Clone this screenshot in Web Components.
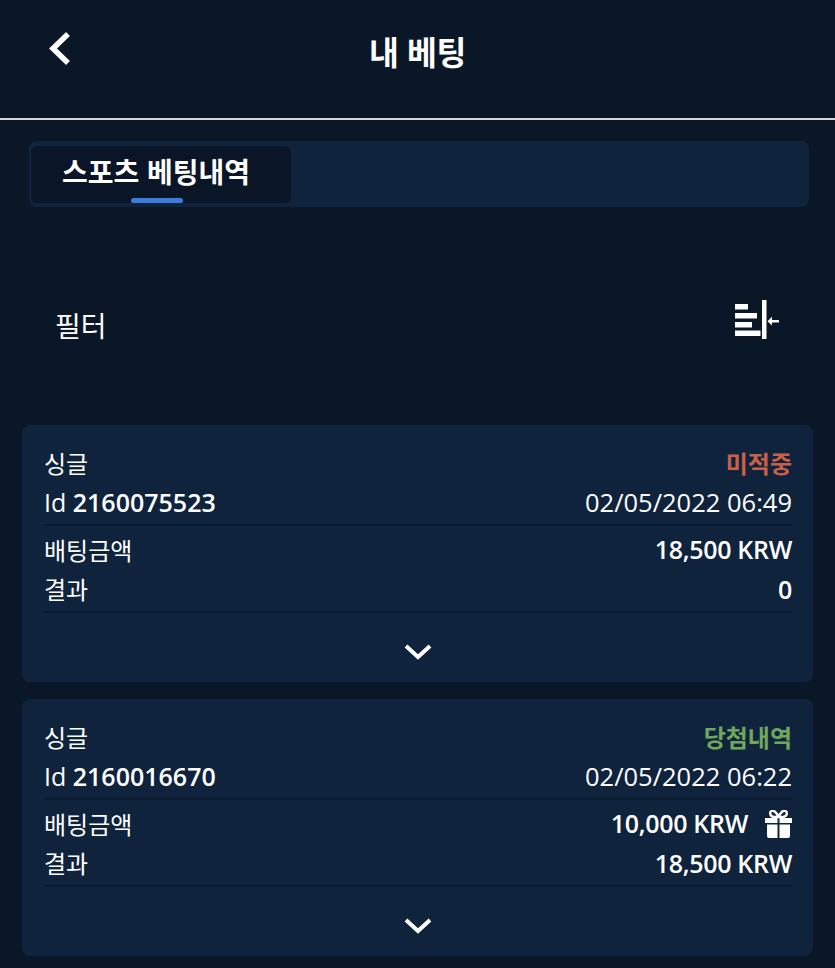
<!DOCTYPE html>
<html lang="ko">
<head>
<meta charset="utf-8">
<title>내 베팅</title>
<style>
    html, body { margin: 0; background: #0a1727; }
    body {
        width: 835px;
        height: 968px;
        overflow: hidden;
        color: #fff;
        font-family: "Open Sans", "Noto Sans CJK KR", sans-serif;
    }
</style>
</head>
<body>
<app-header>내 베팅</app-header>
<tab-bar>스포츠 베팅내역</tab-bar>
<filter-bar>필터</filter-bar>
<bet-list>
    <bet-card status="미적중" tone="lost" bet-id="2160075523" date="02/05/2022 06:49" stake="18,500 KRW" result="0"></bet-card>
    <bet-card status="당첨내역" tone="won" bet-id="2160016670" date="02/05/2022 06:22" stake="10,000 KRW" result="18,500 KRW" gift></bet-card>
</bet-list>

<script>
const KR = '"Noto Sans CJK KR", sans-serif';

class AppHeader extends HTMLElement {
    constructor() {
        super();
        this.attachShadow({ mode: 'open' }).innerHTML = `
            <style>
                :host { display: flex; align-items: center; justify-content: center; height: 118px; border-bottom: 2px solid #d3d7da; position: relative; }
                h1 { margin: -16px 0 0; font: 700 32.5px/1 ${KR}; letter-spacing: -0.5px; }
                svg { position: absolute; left: 46px; top: 30px; }
            </style>
            <svg width="26" height="38" viewBox="0 0 26 38" fill="none"><path d="M22 4 7 18.5 22 33" stroke="#fff" stroke-width="5.5"/></svg>
            <h1><slot></slot></h1>`;
    }
}

class TabBar extends HTMLElement {
    constructor() {
        super();
        this.attachShadow({ mode: 'open' }).innerHTML = `
            <style>
                :host { display: block; box-sizing: border-box; width: 780px; height: 66px; margin: 21px 0 0 29px; padding: 5px 0 4px 2px; background: #10233d; border-radius: 8px; }
                .tab { position: relative; display: flex; align-items: center; justify-content: center; box-sizing: border-box; width: 260px; height: 57px; padding: 0 10px 8px 0; background: #0a1627; border-radius: 6px; font: 700 28px/1 ${KR}; }
                .tab::after { content: ""; position: absolute; left: 100px; bottom: 0; width: 52px; height: 5px; border-radius: 3px; background: #3b7ddd; }
            </style>
            <div class="tab"><slot></slot></div>`;
    }
}

class FilterBar extends HTMLElement {
    constructor() {
        super();
        this.attachShadow({ mode: 'open' }).innerHTML = `
            <style>
                :host { display: flex; align-items: center; justify-content: space-between; height: 54px; margin-top: 91px; padding: 0 56px 0 55px; font: 400 28px/1 ${KR}; }
                svg { display: block; align-self: flex-start; margin-top: 2px; }
            </style>
            <span><slot></slot></span>
            <svg width="44" height="40" viewBox="0 0 44 40" fill="#fff">
                <rect x="0" y="4" width="13" height="5.500"/>
                <rect x="0" y="13" width="22" height="5.500"/>
                <rect x="0" y="22" width="17" height="5.500"/>
                <rect x="0" y="30.500" width="25.500" height="5.500"/>
                <rect x="27" y="0" width="4.500" height="39"/>
                <path d="M37 20h7v2.400h-7v3.200l-4.500-4.400 4.500-4.400z"/>
            </svg>`;
    }
}

class BetList extends HTMLElement {
    constructor() {
        super();
        this.attachShadow({ mode: 'open' }).innerHTML = `
            <style>
                :host { display: flex; flex-direction: column; gap: 17px; margin: 73px 22px 0; }
            </style>
            <slot></slot>`;
    }
}

class BetCard extends HTMLElement {
    constructor() {
        super();
        const gift = this.hasAttribute('gift') ? `
            <svg width="27" height="28" viewBox="0 0 27 28" fill="#fff">
                <path d="M0 8h12.500v5H0zM14.500 8H27v5H14.500zM2 14.500h10.500V28H4a2 2 0 0 1-2-2zM14.500 14.500H25V26a2 2 0 0 1-2 2h-8.500z"/>
                <path d="M13.500 7C11.500 2 8.500 0 6.500 1S4.500 6 8.500 7zM13.500 7c2-5 5-7 7-6s2 5-2 6z" fill="none" stroke="#fff" stroke-width="2.400"/>
            </svg>` : '';
        this.attachShadow({ mode: 'open' }).innerHTML = `
            <style>
                :host { display: block; box-sizing: border-box; height: 257px; padding: 18px 21px 0 22px; background: #10233d; border-radius: 8px; font-size: 25px; }
                .row { display: flex; align-items: center; justify-content: space-between; box-sizing: border-box; }
                .row.r1 { height: 40px; }
                .row.r2 { height: 43px; padding-bottom: 2px; border-bottom: 2px solid #0a1a2e; }
                .row.r3 { height: 45px; padding-top: 2px; }
                .row.r4 { height: 36px; }
                .rule { height: 2px; margin-top: 4px; background: #0a1a2e; }
                .ko { font: 400 24px/1 ${KR}; }
                .status { font: 700 24px/1 ${KR}; }
                .status.lost { color: #c9604a; }
                .status.won { color: #6fa85c; }
                .id { font-weight: 600; line-height: 1; }
                .val { font-weight: 600; letter-spacing: -0.3px; line-height: 1; }
                .plain { font-weight: 400; line-height: 1; }
                .date { font-size: 25.5px; }
                .right { display: flex; align-items: center; gap: 17px; }
                .right svg { margin-top: 1px; }
                .more { display: flex; justify-content: center; padding-top: 29px; }
            </style>
            <div class="row r1">
                <span class="ko">싱글</span>
                <span class="status ${this.getAttribute('tone')}">${this.getAttribute('status')}</span>
            </div>
            <div class="row r2">
                <span class="plain">Id <span class="id">${this.getAttribute('bet-id')}</span></span>
                <span class="plain date">${this.getAttribute('date')}</span>
            </div>
            <div class="row r3">
                <span class="ko">배팅금액</span>
                <span class="right"><span class="val">${this.getAttribute('stake')}</span>${gift}</span>
            </div>
            <div class="row r4">
                <span class="ko">결과</span>
                <span class="val">${this.getAttribute('result')}</span>
            </div>
            <div class="rule"></div>
            <div class="more">
                <svg width="30" height="20" viewBox="0 0 30 20" fill="none"><path d="M3 4 15 15 27 4" stroke="#fff" stroke-width="4"/></svg>
            </div>`;
    }
}

customElements.define('app-header', AppHeader);
customElements.define('tab-bar', TabBar);
customElements.define('filter-bar', FilterBar);
customElements.define('bet-list', BetList);
customElements.define('bet-card', BetCard);
</script>
</body>
</html>
